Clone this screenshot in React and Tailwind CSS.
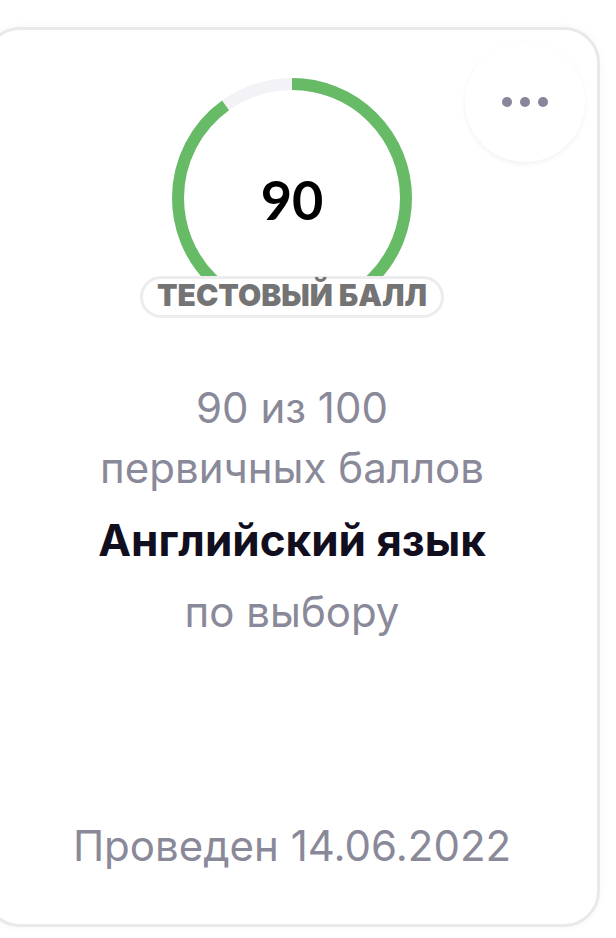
import React from 'react';

const RADIUS = 114;
const LENGTH = 2 * Math.PI * RADIUS;

const exam = {
  score: 90,
  max: 100,
  subject: 'Английский язык',
  kind: 'по выбору',
  date: '14.06.2022',
};

const ScoreRing = ({ score, max }) => (
  <div className="relative flex h-60 w-60 items-center justify-center">
    <svg viewBox="0 0 240 240" className="absolute inset-0 h-full w-full -rotate-90" aria-hidden="true">
      <circle cx="120" cy="120" r={RADIUS} fill="none" stroke="#f2f2f7" strokeWidth="12" />
      <circle
        cx="120"
        cy="120"
        r={RADIUS}
        fill="none"
        stroke="#68bb66"
        strokeWidth="12"
        strokeDasharray={`${(LENGTH * score) / max} ${LENGTH}`}
      />
    </svg>
    <span className="relative pt-1 font-['Lato','Inter',sans-serif] text-[54px] leading-none font-bold text-black">{score}</span>
    <div className="absolute top-[198px] left-1/2 flex h-[84px] w-[304px] -translate-x-1/2 flex-col bg-white">
      <span className="flex h-[42px] items-center justify-center rounded-full border-[3px] border-[#ececee] pb-1 text-[30px] leading-none font-black whitespace-nowrap text-[#747474]">
        ТЕСТОВЫЙ БАЛЛ
      </span>
    </div>
  </div>
);

const MenuButton = () => (
  <button
    type="button"
    aria-label="Меню"
    className="absolute top-3 right-3 flex h-30 w-30 items-center justify-center gap-2 rounded-full bg-white shadow-[0_2px_5px_rgba(20,20,60,0.06)]"
  >
    <span className="h-[10px] w-[10px] rounded-full bg-[#88869a]"></span>
    <span className="h-[10px] w-[10px] rounded-full bg-[#88869a]"></span>
    <span className="h-[10px] w-[10px] rounded-full bg-[#88869a]"></span>
  </button>
);

const App = () => (
  <main className="min-h-screen bg-white pt-[27px] pr-4 font-['Inter','Liberation_Sans',sans-serif]">
    <article className="relative -ml-4 flex min-h-[900px] flex-col items-center rounded-[36px] border-[3px] border-[#e9e9eb] bg-white pt-12 pb-12 text-center text-[42px] leading-[60px] text-[#8a8999] shadow-[0_0_8px_rgba(20,20,60,0.04)]">
      <MenuButton />
      <ScoreRing score={exam.score} max={exam.max} />
      <p className="mt-[60px]">
        {exam.score} из {exam.max}
        <br />
        первичных баллов
      </p>
      <h2 className="mt-3 text-[44px] font-bold text-[#110e20]">{exam.subject}</h2>
      <p className="mt-3">{exam.kind}</p>
      <p className="mt-auto">Проведен {exam.date}</p>
    </article>
  </main>
);

export default App;
